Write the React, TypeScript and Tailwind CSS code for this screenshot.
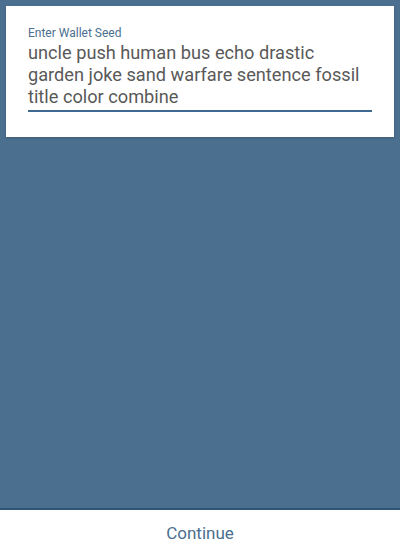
export default function App() {
  return (
    <div
      className="flex h-[557px] w-[400px] flex-col bg-[#4a6f8f]"
      style={{ fontFamily: 'Roboto, "Liberation Sans", sans-serif' }}
    >
      <div className="flex-1 px-[6px] pt-[6px]">
        <div className="bg-white px-[22px] pb-[25px] pt-[19px] shadow-[0_1px_2px_rgba(0,0,0,0.2)]">
          <label className="block text-[12px] leading-[16px] text-[#4a6f8f]">
            Enter Wallet Seed
          </label>
          <div className="border-b-2 border-[#3e6a91] pb-[2px] pt-[1px] text-[18.2px] leading-[22px] text-[#595959]">
            uncle push human bus echo drastic garden joke sand warfare sentence fossil title color combine
          </div>
        </div>
      </div>
      <div className="flex h-[49px] items-center justify-center border-t-2 border-[#2f5474] bg-white">
        <span className="text-[17px] text-[#4a6f8f]">Continue</span>
      </div>
    </div>
  )
}
